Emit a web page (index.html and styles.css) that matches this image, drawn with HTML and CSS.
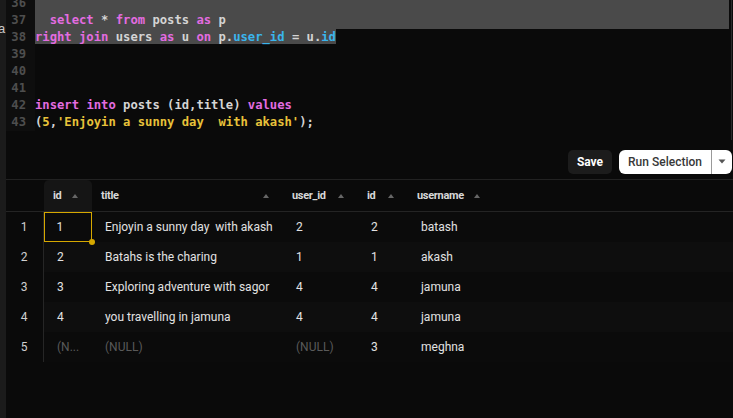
FILE: index.html
```html
<!DOCTYPE html>
<html>
<head>
<meta charset="utf-8">
<link rel="stylesheet" href="styles.css">
</head>
<body>
<div class="app">
  <div class="strip"><span class="strip-a">a</span></div>
  <div class="main">
    <div class="editor">
      <div class="lines">
        <div class="line sel"><span class="ln">36</span><span class="code"></span></div>
        <div class="line sel"><span class="ln">37</span><span class="code">  <span class="kw">select</span> * <span class="kw">from</span> posts <span class="kw">as</span> p</span></div>
        <div class="line"><span class="ln">38</span><span class="code"><span class="hl"><span class="kw">right</span> <span class="kw">join</span> users <span class="kw">as</span> u <span class="kw">on</span> p.<span class="fld">user_id</span> = u.<span class="fld">id</span></span></span></div>
        <div class="line"><span class="ln">39</span><span class="code"></span></div>
        <div class="line"><span class="ln">40</span><span class="code"></span></div>
        <div class="line"><span class="ln">41</span><span class="code"></span></div>
        <div class="line"><span class="ln">42</span><span class="code"><span class="kw">insert</span> <span class="kw">into</span> posts (id,title) <span class="kw">values</span></span></div>
        <div class="line"><span class="ln">43</span><span class="code">(<span class="str">5</span>,<span class="str">'Enjoyin a sunny day  with akash'</span>);</span></div>
      </div>
    </div>
    <div class="toolbar">
      <button class="btn-save">Save</button>
      <div class="btn-run">
        <span class="run-label">Run Selection</span>
        <span class="run-caret"><svg width="8" height="5" viewBox="0 0 8 5"><path d="M0.5 0.5 L7.5 0.5 L4 4.5 Z" fill="#555"/></svg></span>
      </div>
    </div>
    <div class="grid">
      <div class="row head">
        <div class="c rn"></div>
        <div class="c h active"><span>id</span><i class="arr"></i></div>
        <div class="c h"><span>title</span><i class="arr"></i></div>
        <div class="c h"><span>user_id</span><i class="arr"></i></div>
        <div class="c h"><span>id</span><i class="arr"></i></div>
        <div class="c h"><span>username</span><i class="arr"></i></div>
        <div class="c fill"></div>
      </div>
      <div class="row odd">
        <div class="c rn">1</div>
        <div class="c d selected">1<i class="dot"></i></div>
        <div class="c d">Enjoyin a sunny day  with akash</div>
        <div class="c d">2</div>
        <div class="c d">2</div>
        <div class="c d">batash</div>
        <div class="c fill"></div>
      </div>
      <div class="row even">
        <div class="c rn">2</div>
        <div class="c d">2</div>
        <div class="c d">Batahs is the charing</div>
        <div class="c d">1</div>
        <div class="c d">1</div>
        <div class="c d">akash</div>
        <div class="c fill"></div>
      </div>
      <div class="row odd">
        <div class="c rn">3</div>
        <div class="c d">3</div>
        <div class="c d">Exploring adventure with sagor</div>
        <div class="c d">4</div>
        <div class="c d">4</div>
        <div class="c d">jamuna</div>
        <div class="c fill"></div>
      </div>
      <div class="row even">
        <div class="c rn">4</div>
        <div class="c d">4</div>
        <div class="c d">you travelling in jamuna</div>
        <div class="c d">4</div>
        <div class="c d">4</div>
        <div class="c d">jamuna</div>
        <div class="c fill"></div>
      </div>
      <div class="row odd">
        <div class="c rn">5</div>
        <div class="c d null">(N...</div>
        <div class="c d null">(NULL)</div>
        <div class="c d null">(NULL)</div>
        <div class="c d">3</div>
        <div class="c d">meghna</div>
        <div class="c fill"></div>
      </div>
    </div>
  </div>
</div>
</body>
</html>
```

FILE: styles.css
```css
html, body {
  margin: 0;
  padding: 0;
  background: #0a0a0a;
  width: 733px;
  height: 418px;
  overflow: hidden;
}

.app {
  display: flex;
  height: 418px;
}

.strip {
  width: 6px;
  flex: none;
  background: #1b1b1b;
  overflow: hidden;
}

.strip-a {
  display: block;
  margin-top: 21px;
  margin-left: -2px;
  font-family: "Liberation Sans", sans-serif;
  font-size: 13px;
  color: #c8c8c8;
}

.main {
  flex: 1;
  display: flex;
  flex-direction: column;
  min-width: 0;
}

/* editor */
.editor {
  height: 140px;
  overflow: hidden;
  flex: none;
  border-right: 1px solid #2a2a2a;
  box-sizing: border-box;
  margin-right: 1px;
}

.lines {
  margin-top: -5px;
}

.line {
  display: flex;
  height: 17px;
  line-height: 17px;
  font-family: "DejaVu Sans Mono", monospace;
  font-size: 12.2px;
  font-weight: bold;
  color: #d4d4d4;
  white-space: pre;
}

.ln {
  width: 20px;
  padding-right: 9px;
  text-align: right;
  color: #4e4e4e;
  flex: none;
  background: #0e0e0e;
}

.code {
  flex: 1;
  margin-right: 2px;
}

.line.sel .code {
  background: #4a4a4a;
}

.hl {
  background: #4a4a4a;
  display: inline-block;
  height: 15px;
  line-height: 17px;
  vertical-align: top;
}

.kw { color: #e36ce0; }
.fld { color: #3bb5ec; }
.str { color: #e8c23a; }

/* toolbar */
.toolbar {
  height: 40px;
  flex: none;
  display: flex;
  justify-content: flex-end;
  align-items: center;
  gap: 7px;
  padding-right: 1px;
  padding-top: 4px;
  border-bottom: 1px solid #222;
  box-sizing: border-box;
}

.btn-save {
  height: 24px;
  width: 44px;
  border: none;
  border-radius: 5px;
  background: #1c1c1c;
  color: #fff;
  font-family: Roboto, sans-serif;
  font-weight: 700;
  font-size: 12px;
  padding: 0;
}

.btn-run {
  height: 24px;
  width: 113px;
  display: flex;
  align-items: stretch;
  background: #fff;
  border-radius: 6px;
}

.run-label {
  flex: 1;
  display: flex;
  align-items: center;
  justify-content: center;
  font-family: Roboto, sans-serif;
  font-weight: 500;
  font-size: 12px;
  color: #383838;
  border-right: 1px solid #9a9a9a;
}

.run-caret {
  width: 20px;
  display: flex;
  align-items: center;
  justify-content: center;
}

/* grid */
.grid {
  display: flex;
  flex-direction: column;
}

.row {
  display: grid;
  grid-template-columns: 38px 48px 191px 75px 50px 86px 1fr;
  height: 30px;
}

.row.head {
  height: 32px;
  border-bottom: 1px solid #242424;
  box-sizing: border-box;
}

.row.odd { background: #0b0b0b; }
.row.even { background: #0e0e0e; }
.row .rn { background: #0a0a0a; }

.c {
  display: flex;
  align-items: center;
  font-family: Roboto, sans-serif;
  white-space: pre;
  position: relative;
  box-sizing: border-box;
}

.rn {
  justify-content: center;
  color: #d0d0d0;
  font-size: 12px;
  border-right: 1px solid #262626;
  padding-right: 1px;
}

.head .rn {
  border-right: none;
}

.h {
  padding-left: 9px;
  justify-content: space-between;
  padding-right: 14px;
  font-size: 11px;
  font-weight: 700;
  letter-spacing: -0.3px;
  color: #d8d8d8;
}

.h.active {
  background: #151515;
  border-radius: 5px 5px 0 0;
}

.arr {
  width: 0;
  height: 0;
  border-left: 3.5px solid transparent;
  border-right: 3.5px solid transparent;
  border-bottom: 4px solid #666;
}

.d {
  padding-left: 13px;
  font-size: 12px;
  color: #e2e2e2;
}

.d.null {
  color: #5a5a5a;
}

.selected {
  border: 1.5px solid #d6a800;
  padding-left: 11.5px;
}

.dot {
  position: absolute;
  right: -4px;
  bottom: -4px;
  width: 6px;
  height: 6px;
  border-radius: 50%;
  background: #d6a800;
}
```
